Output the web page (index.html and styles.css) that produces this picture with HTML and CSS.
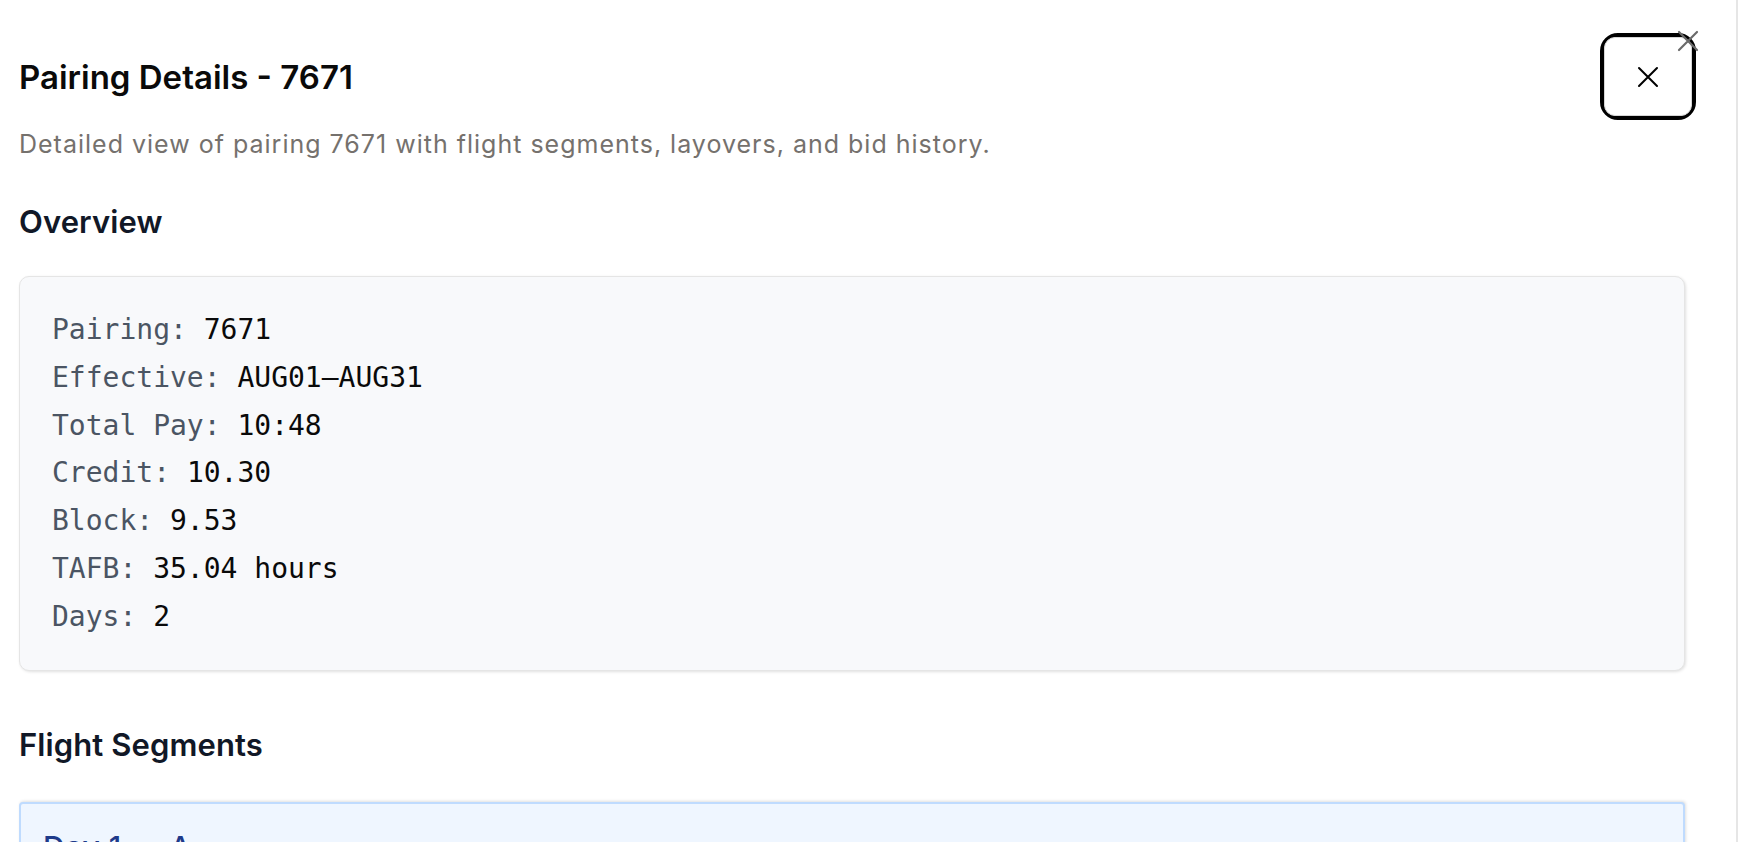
FILE: index.html
```html
<!DOCTYPE html>
<html lang="en">
<head>
<meta charset="utf-8">
<title>Pairing Details - 7671</title>
<link rel="stylesheet" href="styles.css">
</head>
<body>
<div class="dialog">
  <button class="dismiss" aria-label="Close dialog">
    <svg viewBox="0 0 24 24" width="36" height="36"><path d="M18 6 6 18M6 6l12 12"/></svg>
  </button>
  <header class="head">
    <h1 class="title">Pairing Details - 7671</h1>
    <span class="ring">
      <button class="close" aria-label="Close">
        <svg viewBox="0 0 24 24" width="36" height="36"><path d="M18 6 6 18M6 6l12 12"/></svg>
      </button>
    </span>
  </header>
  <p class="subtitle">Detailed view of pairing 7671 with flight segments, layovers, and bid history.</p>

  <h2 class="section">Overview</h2>
  <div class="overview">
    <div class="row"><span class="k">Pairing:</span> <span class="v">7671</span></div>
    <div class="row"><span class="k">Effective:</span> <span class="v">AUG01–AUG31</span></div>
    <div class="row"><span class="k">Total Pay:</span> <span class="v">10:48</span></div>
    <div class="row"><span class="k">Credit:</span> <span class="v">10.30</span></div>
    <div class="row"><span class="k">Block:</span> <span class="v">9.53</span></div>
    <div class="row"><span class="k">TAFB:</span> <span class="v">35.04 hours</span></div>
    <div class="row"><span class="k">Days:</span> <span class="v">2</span></div>
  </div>

  <h2 class="section section-gap">Flight Segments</h2>
  <div class="segments">
    <div class="day">Day 1 — A</div>
  </div>
</div>
</body>
</html>
```
FILE: styles.css
```css
html, body {
  margin: 0;
  padding: 0;
  background: #ffffff;
  overflow: hidden;
}

body {
  font-family: Inter, "Noto Sans", "Liberation Sans", sans-serif;
  color: #0a0a0a;
}

.dialog {
  position: relative;
  box-sizing: border-box;
  min-height: 100vh;
  padding: 33px 51px 40px 19px;
  border-right: 2px solid #e6e6e6;
}

.dismiss {
  position: absolute;
  top: 23px;
  right: 30px;
  width: 36px;
  height: 36px;
  padding: 0;
  border: 0;
  background: transparent;
  z-index: 2;
}

.dismiss svg {
  display: block;
  fill: none;
  stroke: #6a6a6a;
  stroke-width: 1.45;
  stroke-linecap: round;
}

.head {
  display: flex;
  align-items: center;
  justify-content: space-between;
  margin-right: -11px;
}

.title {
  margin: 0;
  font-size: 33px;
  line-height: 40px;
  font-weight: 600;
  letter-spacing: 0;
  color: #0a0a0a;
}

.ring {
  display: flex;
  box-sizing: border-box;
  width: 96px;
  height: 87px;
  border: 4px solid #000;
  border-radius: 18px;
}

.close {
  flex: 1;
  display: flex;
  align-items: center;
  justify-content: center;
  margin: 0;
  padding: 0;
  background: #fff;
  border: 1px solid #d6d6d6;
  border-radius: 11px;
}

.close svg {
  display: block;
  fill: none;
  stroke: #000;
  stroke-width: 1.35;
  stroke-linecap: round;
}

.subtitle {
  margin: 7px 0 0;
  font-size: 25px;
  line-height: 34px;
  letter-spacing: 1px;
  color: #75716d;
}

.section {
  margin: 42px 0 0;
  font-size: 31px;
  line-height: 38px;
  font-weight: 600;
  letter-spacing: 0.1px;
  color: #111827;
}

.section-gap {
  margin-top: 55px;
}

.overview {
  margin-top: 35px;
  padding: 29px 32px 29px;
  background: #f8f9fb;
  border: 1px solid #e5e5e5;
  border-radius: 10px;
  box-shadow: 1px 1px 3px rgba(0, 0, 0, 0.12);
  font-family: "DejaVu Sans Mono", "Liberation Mono", monospace;
  font-size: 28px;
  line-height: 47.8px;
}

.k {
  color: #4b5563;
}

.v {
  color: #0a0a0a;
}

.segments {
  margin-top: 38px;
  padding: 25px 22px;
  background: #eff6ff;
  border: 2px solid #bfdbfe;
  border-radius: 4px;
  box-shadow: 1px -1px 3px rgba(0, 0, 0, 0.12);
}

.day {
  font-size: 30px;
  line-height: 36px;
  font-weight: 500;
  letter-spacing: 0.6px;
  color: #1e3a8a;
}
```
